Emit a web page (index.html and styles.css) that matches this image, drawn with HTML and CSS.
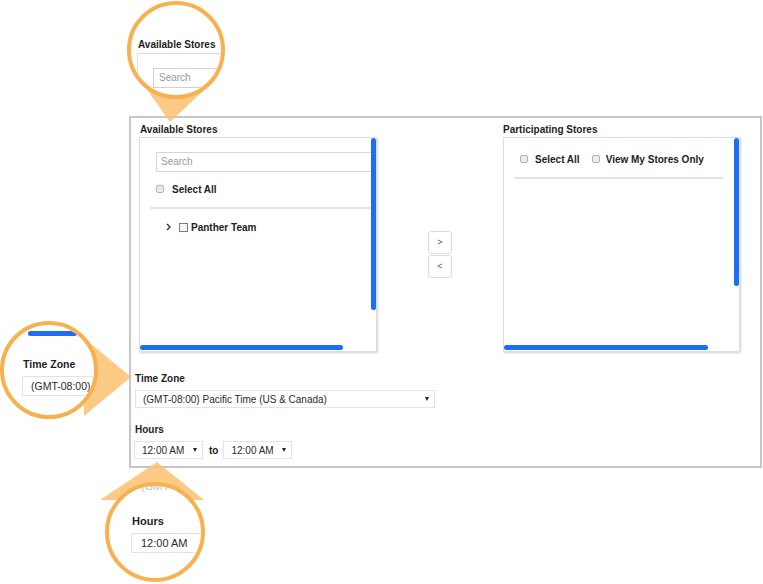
FILE: index.html
```html
<!DOCTYPE html>
<html>
<head>
<meta charset="utf-8">
<link rel="stylesheet" href="styles.css">
</head>
<body>
<div class="page">
  <div class="frame">
    <div class="stores">
      <div class="col col-avail">
        <div class="label label-avail">Available Stores</div>
        <div class="box">
          <div class="box-content avail">
            <div class="search">Search</div>
            <div class="check-row row-select"><span class="cb"></span><span class="cb-text">Select All</span></div>
            <div class="rule"></div>
            <div class="tree-row">
              <svg class="chev" width="5" height="8" viewBox="0 0 5 8"><path d="M1 1 L4 4 L1 7" fill="none" stroke="#333" stroke-width="1.4"/></svg>
              <span class="cb-sq"></span>
              <span class="tree-text">Panther Team</span>
            </div>
          </div>
          <div class="vbar vbar-avail"></div>
          <div class="hbar hbar-avail"></div>
        </div>
      </div>
      <div class="mover">
        <div class="move-btn">&gt;</div>
        <div class="move-btn">&lt;</div>
      </div>
      <div class="col col-part">
        <div class="label">Participating Stores</div>
        <div class="box">
          <div class="box-content part">
            <div class="check-row">
              <span class="cb"></span><span class="cb-text">Select All</span>
              <span class="cb cb-second"></span><span class="cb-text cb-text-second">View My Stores Only</span>
            </div>
            <div class="rule rule-part"></div>
          </div>
          <div class="vbar vbar-part"></div>
          <div class="hbar hbar-part"></div>
        </div>
      </div>
    </div>
    <div class="label tz-label">Time Zone</div>
    <div class="select select-tz"><span>(GMT-08:00) Pacific Time (US &amp; Canada)</span><span class="caret"></span></div>
    <div class="label hours-label">Hours</div>
    <div class="hours-row">
      <div class="select select-hour"><span>12:00 AM</span><span class="caret"></span></div>
      <span class="to">to</span>
      <div class="select select-hour"><span>12:00 AM</span><span class="caret"></span></div>
    </div>
  </div>

  <svg class="pointers" width="763" height="584" viewBox="0 0 763 584">
    <polygon points="140,80 215,80 170,122" />
    <polygon points="84,338 84,416 131,377" />
    <polygon points="100,500 204,500 157,462" />
  </svg>

  <div class="lens lens-top">
    <div class="lens-body lt-body">
      <div class="lt-label">Available Stores</div>
      <div class="lt-box">
        <div class="lt-search">Search</div>
      </div>
    </div>
  </div>

  <div class="lens lens-left">
    <div class="lens-body ll-body">
      <div class="ll-bar"></div>
      <div class="ll-label">Time Zone</div>
      <div class="ll-select">(GMT-08:00) Pacific Time</div>
      <div class="ll-label ll-hours">Hours</div>
    </div>
  </div>

  <div class="lens lens-bottom">
    <div class="lens-body lb-body">
      <div class="lb-faded">(GMT-08:00)</div>
      <div class="lb-label">Hours</div>
      <div class="lb-select">12:00 AM</div>
    </div>
  </div>
</div>
</body>
</html>
```

FILE: styles.css
```css
html, body {
  margin: 0;
  padding: 0;
  background: #ffffff;
}

.page {
  position: relative;
  width: 763px;
  height: 584px;
  overflow: hidden;
  box-sizing: border-box;
  padding: 116px 0 0 129px;
  font-family: "Liberation Sans", Arial, Helvetica, sans-serif;
  color: #222;
}

.frame {
  width: 633px;
  height: 352px;
  box-sizing: border-box;
  border: 2px solid #c6c6c6;
  padding: 6px 0 0 4px;
}

.stores {
  display: flex;
  margin-left: 4px;
}

.col-avail { width: 238px; }
.col-part { width: 237px; }

.label {
  font-size: 10px;
  line-height: 12px;
  height: 12px;
  font-weight: bold;
  color: #1e1e1e;
  margin-bottom: 1px;
}

.label-avail { padding-left: 1px; }

.box {
  position: relative;
  height: 215px;
  box-sizing: border-box;
  border: 1px solid #dedede;
  box-shadow: 1px 1px 2px rgba(0, 0, 0, 0.18);
  background: #fff;
  overflow: hidden;
}

.box-content.avail { padding: 14px 0 0 16px; }
.box-content.part { padding: 15px 0 0 16px; }

.search {
  width: 222px;
  height: 20px;
  box-sizing: border-box;
  border: 1px solid #d6d6d6;
  font-size: 10px;
  line-height: 18px;
  color: #9a9a9a;
  padding-left: 4px;
}

.check-row {
  display: flex;
  align-items: center;
  height: 12px;
}

.row-select { margin-top: 11px; }

.cb {
  width: 8px;
  height: 8px;
  box-sizing: border-box;
  border: 1px solid #b4b4b4;
  border-radius: 2px;
  background: #ececec;
  flex: none;
}

.cb-text {
  font-size: 10px;
  font-weight: bold;
  color: #222;
  margin-left: 8px;
  white-space: nowrap;
}

.part .cb-text { margin-left: 7px; }
.cb-second { margin-left: 12px; }
.part .cb-text-second { margin-left: 6px; }

.rule {
  height: 2px;
  background: #e2e2e2;
  margin: 12px 0 0 -6px;
}

.rule-part {
  width: 209px;
}

.tree-row {
  display: flex;
  align-items: center;
  height: 12px;
  margin: 12px 0 0 10px;
}

.chev { flex: none; }

.cb-sq {
  width: 9px;
  height: 9px;
  box-sizing: border-box;
  border: 1px solid #7a7a7a;
  background: #f3f7fb;
  margin-left: 8px;
  flex: none;
}

.tree-text {
  font-size: 10px;
  font-weight: bold;
  color: #222;
  margin-left: 3px;
}

.vbar {
  position: absolute;
  top: 0;
  right: 0;
  width: 5px;
  border-radius: 3px;
  background: #1b6ff0;
}

.vbar-avail { height: 172px; }
.vbar-part { height: 148px; }

.hbar {
  position: absolute;
  left: 0;
  bottom: 1px;
  height: 5px;
  border-radius: 3px;
  background: #1b6ff0;
}

.hbar-avail { width: 203px; }
.hbar-part { width: 204px; }

.mover {
  width: 126px;
  display: flex;
  flex-direction: column;
  align-items: center;
  gap: 1px;
  padding-top: 107px;
}

.move-btn {
  width: 24px;
  height: 23px;
  box-sizing: border-box;
  border: 1px solid #dcdcdc;
  border-radius: 3px;
  background: #fff;
  font-size: 9px;
  line-height: 21px;
  text-align: center;
  color: #555;
}

.tz-label { margin-top: 21px; margin-bottom: 5px; }

.select {
  display: flex;
  align-items: center;
  justify-content: space-between;
  height: 18px;
  box-sizing: border-box;
  border: 1px solid #e4e4e4;
  background: #fff;
  font-size: 10px;
  color: #2a2a2a;
  padding: 0 5px 0 7px;
}

.select-tz { width: 300px; }

.caret {
  width: 0;
  height: 0;
  border-left: 2.5px solid transparent;
  border-right: 2.5px solid transparent;
  border-top: 4px solid #222;
}

.hours-label { margin-top: 16px; margin-bottom: 5px; }

.hours-row {
  display: flex;
  align-items: center;
  margin-left: -1px;
}

.select-hour { width: 69px; }

.to {
  font-size: 10px;
  font-weight: bold;
  color: #222;
  margin: 0 5px 0 6px;
}

/* callouts */
.pointers {
  position: absolute;
  left: 0;
  top: 0;
  pointer-events: none;
}

.pointers polygon {
  fill: #fbc16e;
  opacity: 0.85;
}

.lens {
  position: absolute;
  box-sizing: border-box;
  border: 4px solid #f7b24f;
  border-radius: 50%;
  background: #fff;
  overflow: hidden;
}

.lens-top { left: 127px; top: 1px; width: 98px; height: 98px; }
.lens-left { left: 0; top: 321px; width: 98px; height: 98px; }
.lens-bottom { left: 105px; top: 482px; width: 100px; height: 100px; }

.lens-body {
  width: 200px;
  white-space: nowrap;
}

.lt-body { padding: 33px 0 0 7px; }

.lt-label {
  font-size: 10px;
  line-height: 13px;
  font-weight: bold;
  color: #1e1e1e;
}

.lt-box {
  margin: 2px 0 0 -1px;
  border-top: 1px solid #dcdcdc;
  border-left: 1px solid #dcdcdc;
  height: 60px;
  padding: 14px 0 0 15px;
}

.lt-search {
  width: 120px;
  height: 20px;
  box-sizing: border-box;
  border: 1px solid #d2d2d2;
  font-size: 10px;
  line-height: 18px;
  color: #999;
  padding-left: 5px;
}

.ll-body { padding: 6px 0 0 24px; }

.ll-bar {
  width: 49px;
  height: 5px;
  border-radius: 3px;
  background: #1b6ff0;
}

.ll-label {
  font-size: 10.5px;
  line-height: 13px;
  font-weight: bold;
  color: #1e1e1e;
  margin: 22px 0 0 -5px;
}

.ll-select {
  margin: 5px 0 0 -6px;
  height: 20px;
  box-sizing: border-box;
  border: 1px solid #e2e2e2;
  font-size: 10.5px;
  line-height: 18px;
  padding-left: 8px;
  color: #2a2a2a;
}

.ll-hours {
  margin-top: 15px;
  color: #888;
}

.lb-body { padding: 0 0 0 23px; }

.lb-faded {
  margin-top: -6px;
  font-size: 11px;
  line-height: 13px;
  color: #b8b8b8;
  padding-left: 9px;
}

.lb-label {
  margin-top: 22px;
  font-size: 11px;
  line-height: 13px;
  font-weight: bold;
  color: #1e1e1e;
}

.lb-select {
  margin: 5px 0 0 -1px;
  width: 120px;
  height: 20px;
  box-sizing: border-box;
  border: 1px solid #e2e2e2;
  font-size: 11px;
  line-height: 18px;
  padding-left: 9px;
  color: #2a2a2a;
}
```
